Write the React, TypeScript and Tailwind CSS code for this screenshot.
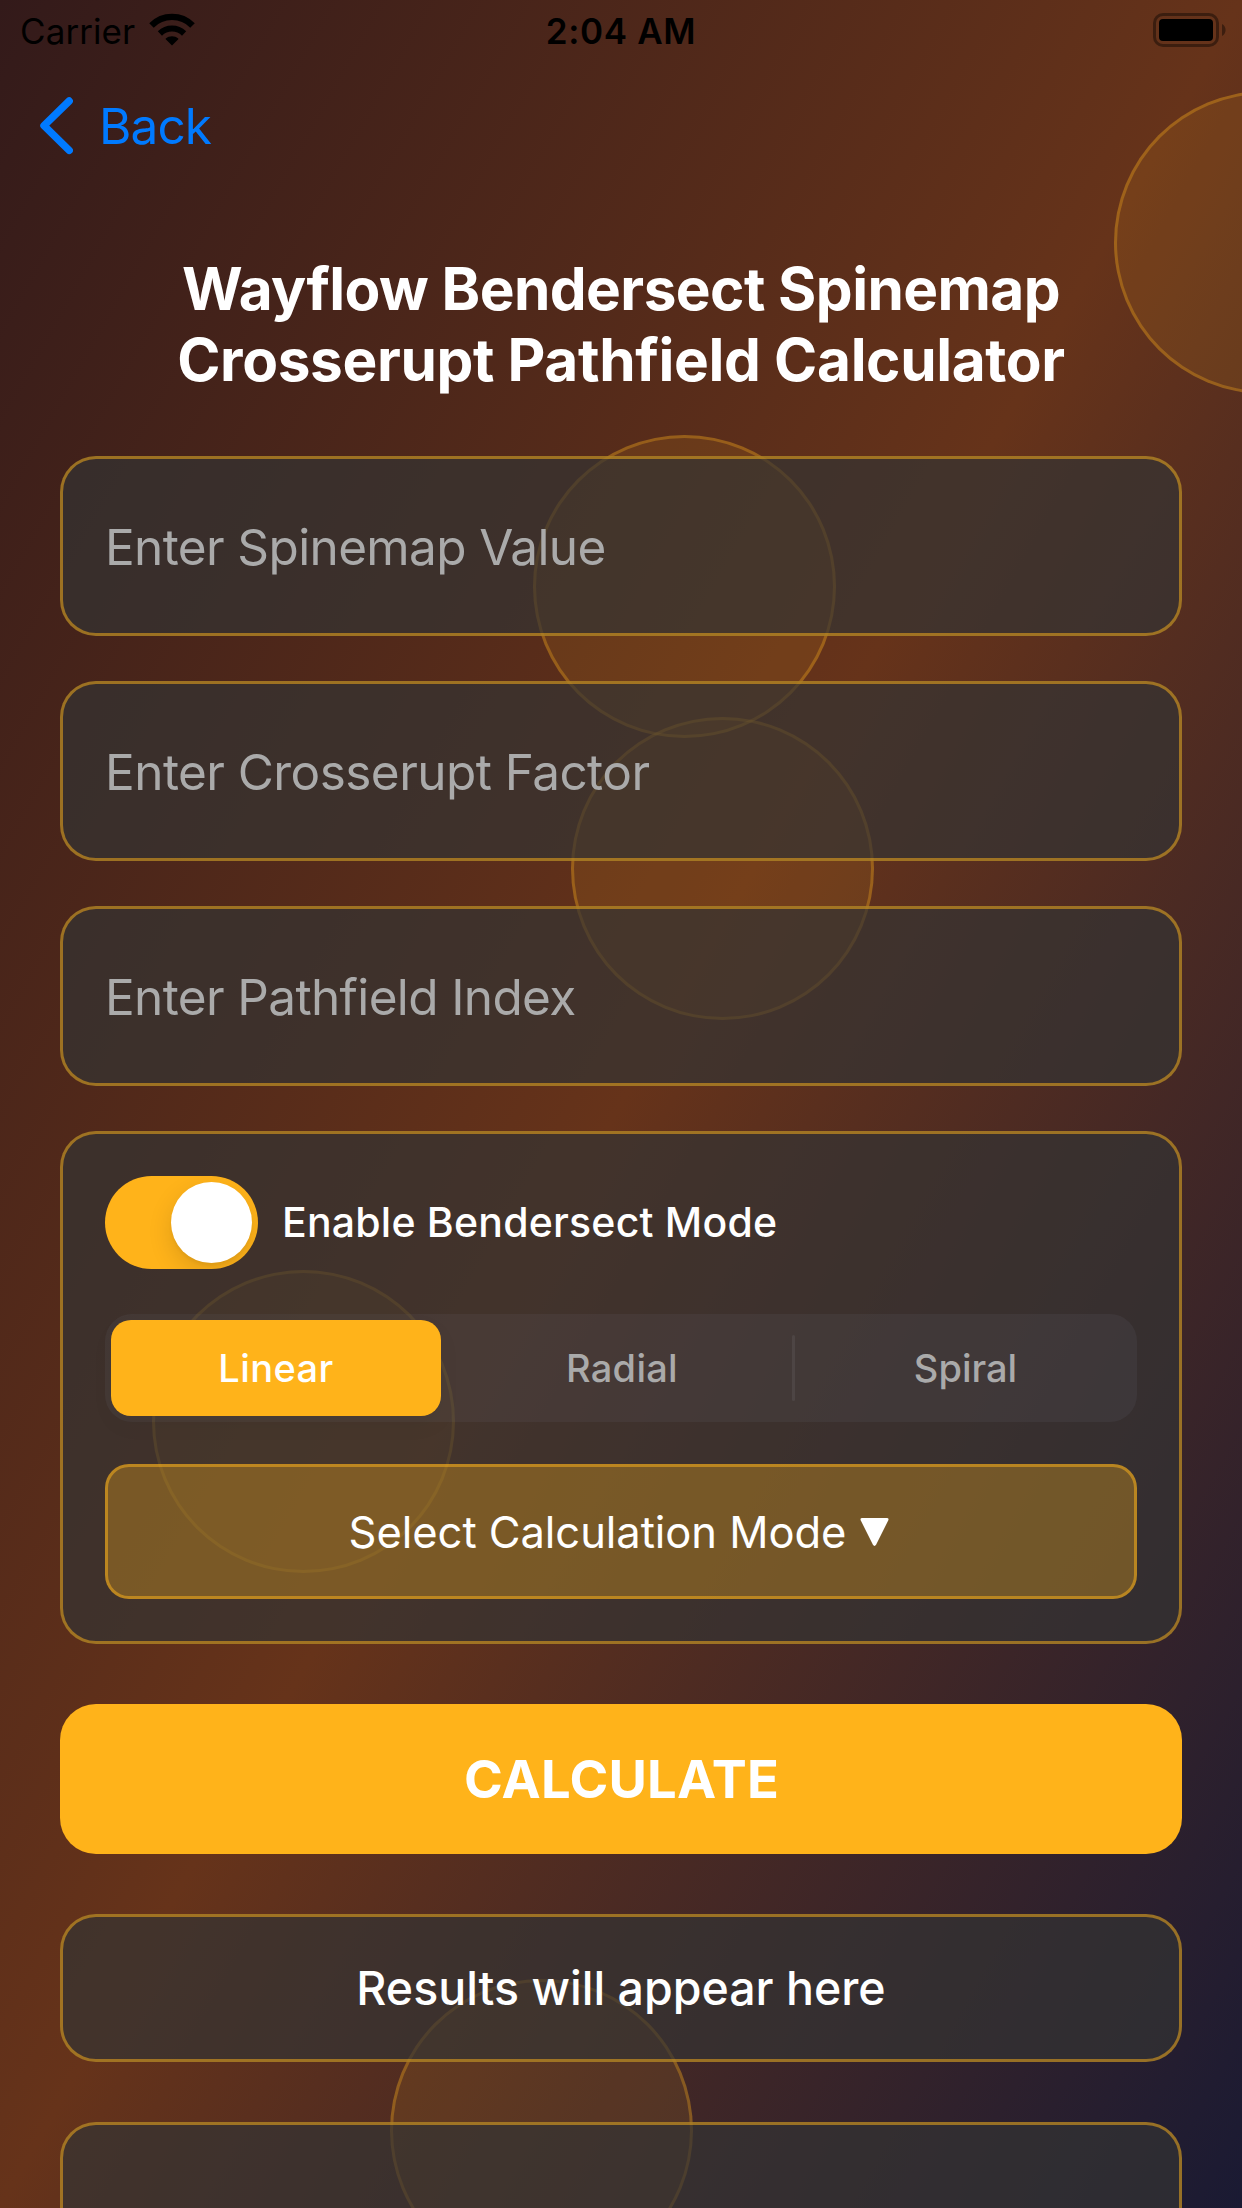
const circles = [
  "left-[1114px] top-[91px]",
  "left-[533px] top-[435px]",
  "left-[571px] top-[717px]",
  "left-[152px] top-[1270px]",
  "left-[390px] top-[1979px]",
];

const fields = [
  { label: "Enter Spinemap Value", tracking: "tracking-[-0.63px]" },
  { label: "Enter Crosserupt Factor", tracking: "tracking-[-0.56px]" },
  { label: "Enter Pathfield Index", tracking: "tracking-[-0.64px]" },
];

const card = "rounded-[36px] border-[3px] border-[#ffb31a]/50 bg-[#333333]/70";

function StatusBar() {
  return (
    <header className="grid h-[62px] shrink-0 grid-cols-3 items-center pr-4 pl-5 text-[35px] leading-none text-black">
      <div className="flex items-center gap-[14px]">
        <span className="tracking-[0.08px]">Carrier</span>
        <svg className="mb-[3px] h-[33px] w-[46px]" viewBox="0 0 46 33" fill="none" stroke="#000">
          <path d="M2.5 12.4 A29 29 0 0 1 43.5 12.4" strokeWidth="6.4" />
          <path d="M10.9 20.5 A17.4 17.4 0 0 1 35.1 20.5" strokeWidth="6" />
          <path
            d="M23 32.4 L16.7 26.2 Q16.4 25.8 16.8 25.5 C20.2 22.4 25.8 22.4 29.2 25.5 Q29.6 25.8 29.3 26.2 Z"
            fill="#000"
            stroke="none"
          />
        </svg>
      </div>
      <span className="pr-1 text-center font-semibold tracking-[0.68px]">2:04 AM</span>
      <svg className="mb-[2px] h-[34px] w-[73px] justify-self-end" viewBox="0 0 73 34">
        <rect x="1.5" y="1.5" width="63" height="31" rx="8.5" fill="none" stroke="#000" strokeOpacity="0.4" strokeWidth="3" />
        <rect x="6" y="6" width="54" height="22" rx="4" fill="#000" />
        <path d="M69 11 C73.8 13 73.8 21 69 23 Z" fill="#000" fillOpacity="0.4" />
      </svg>
    </header>
  );
}

export default function App() {
  return (
    <div className="relative h-[2208px] w-[1242px] overflow-hidden bg-linear-to-br/srgb from-[#331a1a] via-[#66331a] to-[#1a1a33] font-[Inter,sans-serif] text-white">
      {circles.map((place) => (
        <div key={place} className={`absolute size-[303px] rounded-full border-[3px] border-[#ffb31a]/30 bg-[#ffb31a]/10 ${place}`} />
      ))}

      <div className="relative flex flex-col">
        <StatusBar />

        <nav className="flex h-[128px] shrink-0 items-center pl-[39px] text-[#007aff]">
          <svg className="h-[58px] w-[34px]" viewBox="0 0 34 58" fill="none" stroke="#007aff" strokeWidth="7.4" strokeLinecap="round" strokeLinejoin="round">
            <path d="M30.2 4 L5 28.7 L30.2 53.4" />
          </svg>
          <span className="ml-[26px] pt-[2px] text-[49.5px] leading-none tracking-[-0.9px]">Back</span>
        </nav>

        <h1 className="mt-[63px] flex flex-col items-center text-[58.5px] leading-[71px] font-bold">
          <span className="tracking-[-0.57px]">Wayflow Bendersect Spinemap</span>
          <span className="tracking-[-0.36px]">Crosserupt Pathfield Calculator</span>
        </h1>

        <main className="mt-[61px] flex flex-col px-[60px]">
          <div className="flex flex-col gap-[45px]">
            {fields.map((f) => (
              <div key={f.label} className={`flex h-[180px] items-center px-[42px] pt-[4px] text-[49.5px] leading-none text-[#aaaaaa] ${card} ${f.tracking}`}>
                {f.label}
              </div>
            ))}

            <section className={`p-[42px] ${card}`}>
              <div className="flex items-center gap-[24px]">
                <div className="flex h-[93px] w-[153px] items-center justify-end overflow-hidden rounded-full bg-[#ffb31a] p-[6px]">
                  <div className="size-[81px] rounded-full bg-white shadow-[0_9px_24px_rgba(0,0,0,0.13),0_3px_3px_rgba(0,0,0,0.04)]" />
                </div>
                <span className="text-[41px] leading-none font-medium tracking-[0.21px]">Enable Bendersect Mode</span>
              </div>

              <div className="mt-[45px] flex h-[108px] items-center rounded-[27px] bg-[#767680]/12 p-[6px] text-[38px] leading-none font-medium text-[#aaaaaa]">
                <div className="flex h-[96px] w-[330px] items-center justify-center rounded-[20px] bg-[#ffb31a] tracking-[0.4px] text-white shadow-[0_9px_24px_rgba(0,0,0,0.04)]">
                  Linear
                </div>
                <div className="flex-1 pl-[11px] text-center tracking-[0.27px]">Radial</div>
                <div className="h-[66px] w-[3px] rounded-full bg-[#8e8e93]/15" />
                <div className="w-[336px] pl-[5px] text-center">Spiral</div>
              </div>

              <div className="mt-[42px] flex h-[135px] items-center justify-center gap-[14px] rounded-[24px] border-[3px] border-[#ffb31a]/50 bg-[#ffb31a]/30 pr-[4px] text-[43.5px] leading-none tracking-[-0.05px]">
                <span className="pt-[2px]">Select Calculation Mode</span>
                <svg className="h-[30px] w-[29px]" viewBox="0 0 29 30" fill="#fff">
                  <path d="M2.2 1 H26.8 Q29.3 1 28.2 3.4 L16.2 27.6 Q14.5 30.4 12.8 27.6 L0.8 3.4 Q-0.3 1 2.2 1 Z" />
                </svg>
              </div>
            </section>
          </div>

          <div className="mt-[60px] flex h-[150px] items-center justify-center rounded-[36px] bg-[#ffb31a] pl-[1px] text-[52.5px] leading-none font-bold tracking-[0.2px]">
            CALCULATE
          </div>

          <div className={`mt-[60px] flex h-[148px] items-center justify-center text-[46.5px] leading-none font-medium ${card}`}>
            Results will appear here
          </div>

          <div className={`mt-[60px] h-[300px] ${card}`} />
        </main>
      </div>
    </div>
  );
}
